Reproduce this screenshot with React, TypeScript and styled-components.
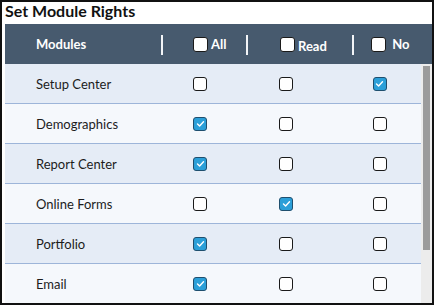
import React from 'react';
import styled, { createGlobalStyle } from 'styled-components';

const GlobalStyle = createGlobalStyle`
  html, body {
    margin: 0;
    padding: 0;
    background: #fff;
  }
  body {
    font-family: Lato, "Noto Sans", "Liberation Sans", sans-serif;
  }
`;

const Frame = styled.div`
  box-sizing: border-box;
  width: 434px;
  height: 305px;
  border: 2px solid #111;
  display: flex;
  flex-direction: column;
  overflow: hidden;
  background: #fff;
`;

const Title = styled.h1`
  margin: 0;
  height: 22px;
  padding-left: 3px;
  font-size: 16px;
  font-weight: 700;
  line-height: 18px;
  color: #111;
`;

const Table = styled.div`
  margin-left: 3px;
  display: flex;
  flex-direction: column;
  flex: 1;
  min-height: 0;
`;

const HeaderRow = styled.div`
  display: grid;
  grid-template-columns: 156px 85px 106px 1fr;
  height: 40px;
  background: #475a6e;
  color: #fff;
  font-size: 13px;
  font-weight: 700;
`;

const HeadCell = styled.div<{ $pad: number; $divider?: boolean; $drop?: number }>`
  position: relative;
  display: flex;
  align-items: center;
  gap: 3px;
  padding-left: ${(p) => p.$pad}px;

  span {
    position: relative;
    top: ${(p) => p.$drop ?? 0}px;
  }

  ${(p) =>
    p.$divider &&
    `
    &::before {
      content: '';
      position: absolute;
      left: 0;
      top: 11px;
      width: 2px;
      height: 20px;
      background: #f2f4f7;
    }
  `}
`;

const Body = styled.div`
  flex: 1;
  min-height: 0;
  display: flex;
`;

const Rows = styled.div`
  flex: 1;
  overflow: hidden;
`;

const ScrollTrack = styled.div`
  width: 11px;
  flex-shrink: 0;
  background: #ececec;
  padding: 2px 2px 0 2px;
  box-sizing: border-box;
`;

const ScrollThumb = styled.div`
  height: 184px;
  background: #9b9b9b;
`;

const Row = styled.div<{ $alt: boolean }>`
  display: grid;
  grid-template-columns: 156px 78px 94px 1fr;
  height: 39px;
  border-bottom: 1px solid #9db5d9;
  background: ${(p) => (p.$alt ? '#f5f8fc' : '#e5ecf6')};
  font-size: 13px;
  color: #1c1c1c;
`;

const Label = styled.div`
  display: flex;
  align-items: center;
  padding-left: 31px;
`;

const BoxCell = styled.div<{ $shift?: number }>`
  display: flex;
  align-items: center;
  justify-content: center;
  padding-left: ${(p) => p.$shift ?? 0}px;
`;

const Box = styled.div<{ $checked: boolean; $size: number }>`
  box-sizing: border-box;
  width: ${(p) => p.$size}px;
  height: ${(p) => p.$size}px;
  border: 1.5px solid ${(p) => (p.$checked ? '#1f4f6e' : '#1a1a1a')};
  border-radius: 3px;
  background: ${(p) => (p.$checked ? '#2b9fd8' : '#fff')};
  display: flex;
  align-items: center;
  justify-content: center;
  flex-shrink: 0;
`;

function Check({ checked, size = 14 }: { checked: boolean; size?: number }) {
  return (
    <Box $checked={checked} $size={size}>
      {checked && (
        <svg width="9" height="9" viewBox="0 0 9 9">
          <polyline points="1.5,5 3.6,7 7.5,2.8" fill="none" stroke="#fff" strokeWidth="1.4" strokeLinecap="round" strokeLinejoin="round" />
        </svg>
      )}
    </Box>
  );
}

const modules: { name: string; rights: [boolean, boolean, boolean] }[] = [
  { name: 'Setup Center', rights: [false, false, true] },
  { name: 'Demographics', rights: [true, false, false] },
  { name: 'Report Center', rights: [true, false, false] },
  { name: 'Online Forms', rights: [false, true, false] },
  { name: 'Portfolio', rights: [true, false, false] },
  { name: 'Email', rights: [true, false, false] },
];

export default function App() {
  return (
    <>
      <GlobalStyle />
      <Frame>
        <Title>Set Module Rights</Title>
        <Table>
          <HeaderRow>
            <HeadCell $pad={31}>
              <span>Modules</span>
            </HeadCell>
            <HeadCell $pad={32} $divider>
              <Check checked={false} size={15} />
              <span>All</span>
            </HeadCell>
            <HeadCell $pad={34} $divider $drop={2}>
              <Check checked={false} size={15} />
              <span>Read</span>
            </HeadCell>
            <HeadCell $pad={19} $divider>
              <Check checked={false} size={15} />
              <span>&nbsp;No</span>
            </HeadCell>
          </HeaderRow>
          <Body>
            <Rows>
              {modules.map((m, i) => (
                <Row key={m.name} $alt={i % 2 === 1}>
                  <Label>{m.name}</Label>
                  <BoxCell>
                    <Check checked={m.rights[0]} />
                  </BoxCell>
                  <BoxCell>
                    <Check checked={m.rights[1]} />
                  </BoxCell>
                  <BoxCell $shift={5}>
                    <Check checked={m.rights[2]} />
                  </BoxCell>
                </Row>
              ))}
            </Rows>
            <ScrollTrack>
              <ScrollThumb />
            </ScrollTrack>
          </Body>
        </Table>
      </Frame>
    </>
  );
}
